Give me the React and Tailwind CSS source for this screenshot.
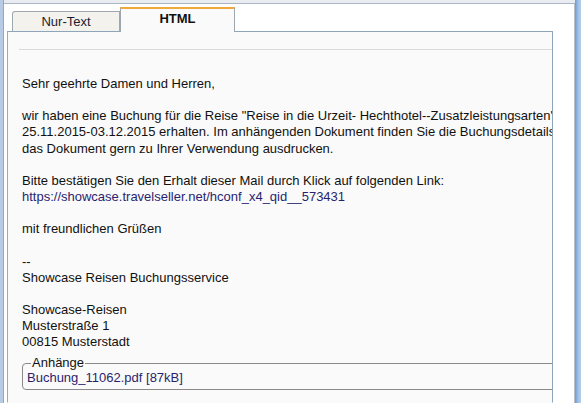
import React from 'react';

// Mail preview window: tab strip (Nur-Text / HTML) over a scrolled message body
const bodyLines = [
  'Sehr geehrte Damen und Herren,',
  '',
  'wir haben eine Buchung für die Reise "Reise in die Urzeit- Hechthotel--Zusatzleistungsarten"',
  '25.11.2015-03.12.2015 erhalten. Im anhängenden Dokument finden Sie die Buchungsdetails',
  'das Dokument gern zu Ihrer Verwendung ausdrucken.',
  '',
  'Bitte bestätigen Sie den Erhalt dieser Mail durch Klick auf folgenden Link:',
  { link: 'https://showcase.travelseller.net/hconf_x4_qid__573431' },
  '',
  'mit freundlichen Grüßen',
  '',
  '--',
  'Showcase Reisen Buchungsservice',
  '',
  'Showcase-Reisen',
  'Musterstraße 1',
  '00815 Musterstadt',
];

const Tab = ({ label, active }) =>
  active ? (
    <div className="relative z-10 -mb-px flex h-[25px] w-[115px] justify-center border-x border-t-2 border-x-[#9ea6ae] border-t-[#f0a93a] bg-[#fafafa] text-[13px] font-bold text-[#111]">
      {label}
    </div>
  ) : (
    <div className="flex h-[20px] w-[108px] justify-center rounded-tl-[3px] border-x border-t border-[#9ea6ae] bg-[#f3f2ed] text-[13px] text-[#1c1c30]">
      {label}
    </div>
  );

export default function App() {
  return (
    <div className="flex h-[403px] w-[581px] overflow-hidden bg-white font-['Liberation_Sans',Arial,sans-serif]">
      {/* window frame, left */}
      <div className="w-[4px] shrink-0 border-r border-[#93a9c0] bg-[#b7cce4]" />

      <div className="flex min-w-0 flex-1 flex-col">
        <div className="h-[4px] border-b border-[#a9b6c4] bg-[#e9edf2]" />

        <div className="flex min-w-0 flex-1 flex-col border-r border-[#b9c2cb] pl-[3px] pr-[21px]">
          {/* tab strip */}
          <div className="flex h-[27px] items-end pl-[5px]">
            <Tab label="Nur-Text" />
            <Tab label="HTML" active />
          </div>

          {/* message panel */}
          <div className="min-w-0 flex-1 overflow-hidden border border-l-[#a3a8ad] border-r-[#8fa6ba] border-t-[#8fa6ba] border-b-transparent bg-[#fafafa]">
            <div className="ml-[11px] mt-[17px] h-px bg-[#dadada]" />

            <div className="mt-[26px] pl-[14px] text-[13px] leading-[16.15px] text-[#111]">
              {bodyLines.map((line, i) =>
                typeof line === 'string' ? (
                  <div key={i} className="h-[16.15px] whitespace-nowrap">
                    {line}
                  </div>
                ) : (
                  <div key={i} className="h-[16.15px] whitespace-nowrap text-[#2a1f6e]">
                    {line.link}
                  </div>
                )
              )}

              <fieldset className="mt-[6px] w-[600px] rounded-[4px] border border-[#8a8a8a] pb-[2px] pl-[4px]">
                <legend className="ml-[4px] px-[1px] text-[13px] leading-[14px] text-[#111]">Anhänge</legend>
                <span className="text-[#2a1f6e]">Buchung_11062.pdf [87kB]</span>
              </fieldset>
            </div>
          </div>
        </div>
      </div>

      {/* window frame, right */}
      <div className="w-[6px] shrink-0 bg-gradient-to-r from-[#6f9acb] via-[#9dbfe4] to-[#b6d0ec]" />
    </div>
  );
}
